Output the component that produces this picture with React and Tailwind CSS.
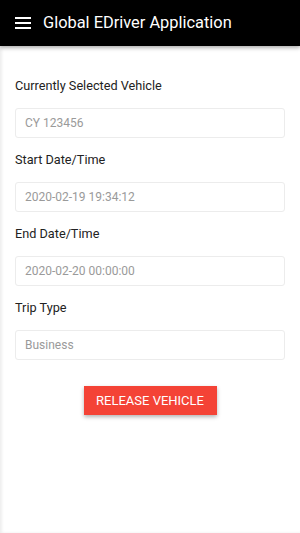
export default function App() {
  const fields = [
    { label: "Currently Selected Vehicle", value: "CY 123456" },
    { label: "Start Date/Time", value: "2020-02-19 19:34:12" },
    { label: "End Date/Time", value: "2020-02-20 00:00:00" },
    { label: "Trip Type", value: "Business" },
  ];

  return (
    <div className="w-[300px] h-[533px] bg-white flex flex-col font-['Roboto',sans-serif] overflow-hidden">
      <header className="h-[46px] bg-black flex items-center px-[15px] shadow-[0_2px_4px_rgba(0,0,0,0.3)] relative z-10">
        <svg width="16" height="12" viewBox="0 0 16 12" className="shrink-0">
          <rect x="0" y="0" width="16" height="2" fill="white" />
          <rect x="0" y="5" width="16" height="2" fill="white" />
          <rect x="0" y="10" width="16" height="2" fill="white" />
        </svg>
        <h1 className="ml-[12px] text-white text-[16.4px] leading-none">Global EDriver Application</h1>
      </header>

      <main className="flex-1 px-[15px] pt-[29px] shadow-[inset_2px_0_3px_rgba(0,0,0,0.07)]">
        {fields.map((f) => (
          <div key={f.label} className="mb-[11px]">
            <label className="block text-[12.7px] leading-[21px] text-[#222]">{f.label}</label>
            <div className="mt-[12px] h-[30px] border border-[#ececec] rounded-[3px] flex items-center px-[9px] text-[12px] text-[#9a9a9a]">
              {f.value}
            </div>
          </div>
        ))}

        <div className="flex justify-center mt-[26px]">
          <button className="h-[29px] w-[133px] bg-[#f44336] text-white text-[13px] uppercase shadow-[0_2px_4px_rgba(0,0,0,0.3)]">
            Release Vehicle
          </button>
        </div>
      </main>
    </div>
  );
}
